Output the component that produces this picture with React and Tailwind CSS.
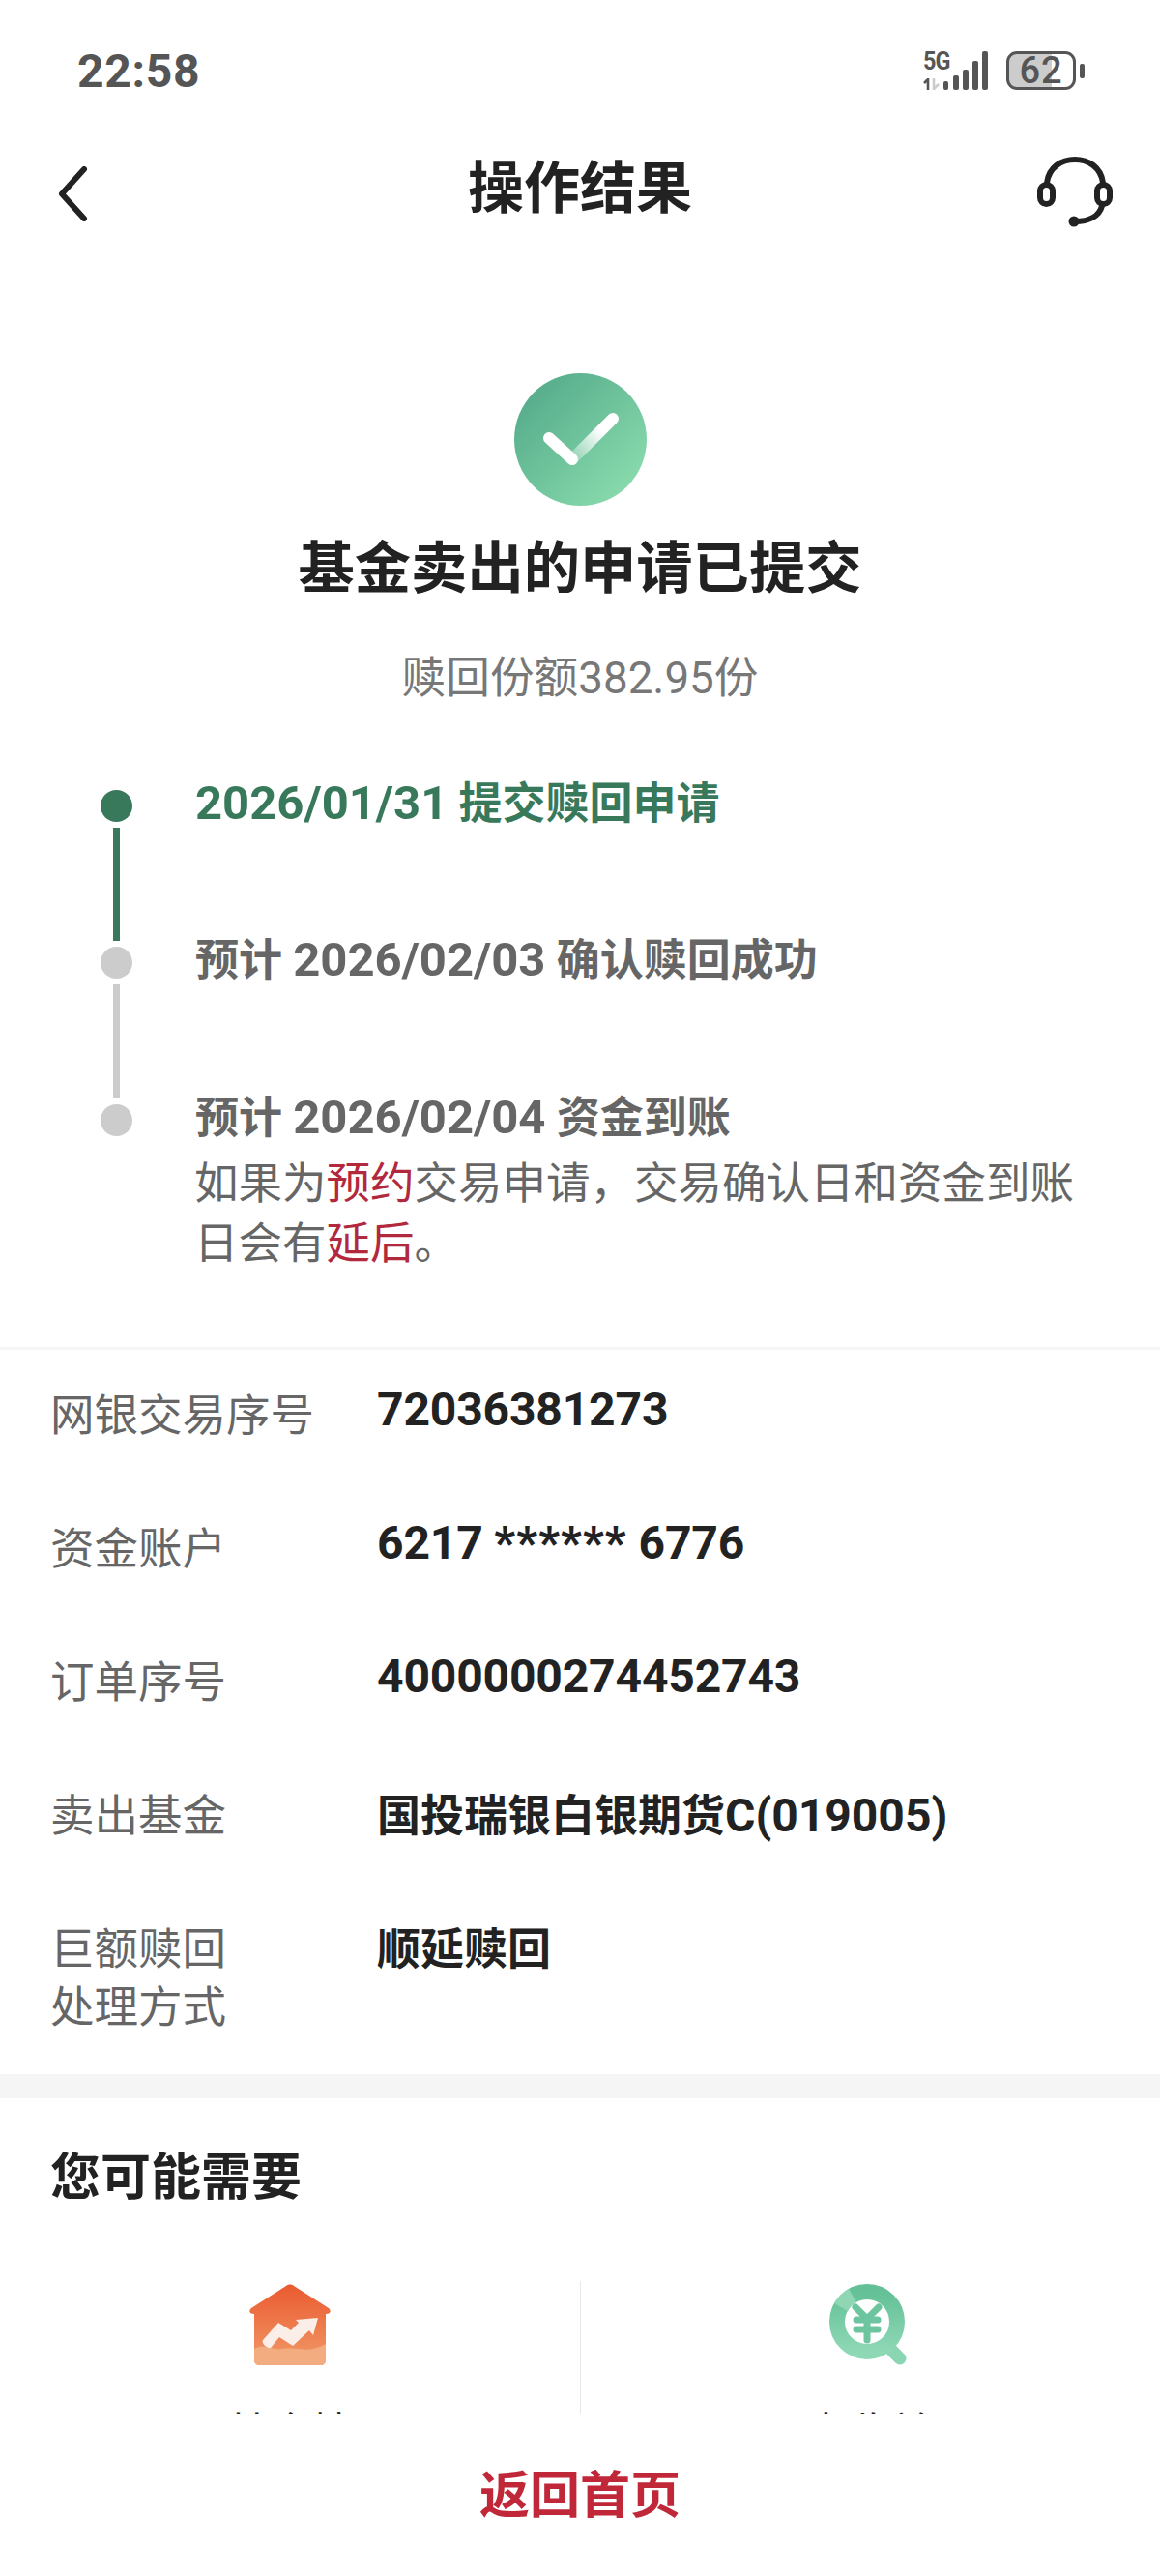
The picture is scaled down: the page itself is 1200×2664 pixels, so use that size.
import React from 'react'

const steps = [
  { pre: '', date: '2026/01/31', text: ' 提交赎回申请', done: true },
  { pre: '预计 ', date: '2026/02/03', text: ' 确认赎回成功' },
]

const rows = [
  { label: '网银交易序号', value: '72036381273', num: true },
  { label: '资金账户', value: <>6217 <span className="tracking-[1.1px]">******</span> 6776</>, num: true },
  { label: '订单序号', value: '4000000274452743', num: true },
  { label: '卖出基金', value: <span className="block -mt-[1px]">国投瑞银白银期货<span className="text-[48px]">C(019005)</span></span> },
  { label: <>巨额赎回<br />处理方式</>, value: '顺延赎回' },
]

function SignalIcon() {
  return (
    <div className="flex items-end gap-[3px] h-[40px]">
      <div className="flex flex-col w-[28px] h-[40px] justify-between">
        <span className="text-[26px] leading-[20px] h-[20px] font-bold text-[#555] tracking-[-1px] scale-x-90 origin-left">5G</span>
        <svg width="18" height="12" viewBox="0 0 18 12">
          <path d="M5 0 L5 12 M1 5 L5 1" stroke="#555" strokeWidth="2.6" fill="none" />
          <path d="M11 0 L11 12 M11 11 L16 6" stroke="#ccc" strokeWidth="2.6" fill="none" />
        </svg>
      </div>
      <svg width="48" height="40" viewBox="0 0 48 40" className="-ml-[11px]">
        <rect x="1" y="31" width="5" height="9" rx="2" fill="#555" />
        <rect x="11" y="25" width="6" height="15" rx="2" fill="#555" />
        <rect x="21" y="19" width="6" height="21" rx="2" fill="#555" />
        <rect x="31" y="10" width="6" height="30" rx="2" fill="#555" />
        <rect x="41" y="0" width="6" height="40" rx="2" fill="#555" />
      </svg>
    </div>
  )
}

function BatteryIcon() {
  return (
    <div className="flex items-center gap-[4px]">
      <div className="w-[72px] h-[40px] rounded-[11px] border-[3px] border-[#555] bg-[linear-gradient(90deg,#ccc_67%,transparent_67%)] flex items-center justify-center">
        <span className="text-[38px] leading-none font-medium text-[#555] tracking-[1px]">62</span>
      </div>
      <div className="w-[5px] h-[15px] rounded-[2px] bg-[#555]"></div>
    </div>
  )
}

function HeadsetIcon() {
  return (
    <svg width="78" height="74" viewBox="0 0 78 74" fill="none" stroke="#222" strokeWidth="6" strokeLinecap="round">
      <path d="M10 27 C12 11 25 3 39 3 C53 3 66 11 68 27" />
      <rect x="3" y="29" width="13" height="20" rx="6.5" />
      <rect x="62" y="29" width="13" height="20" rx="6.5" />
      <path d="M67 51 C64 62 53 67 39 67" />
      <circle cx="38" cy="67" r="5.5" fill="#222" stroke="none" />
    </svg>
  )
}

function CheckCircle() {
  return (
    <svg width="137" height="137" viewBox="0 0 137 137">
      <defs>
        <linearGradient id="circleFill" x1="0.1" y1="0.1" x2="0.9" y2="0.9">
          <stop offset="0" stopColor="#55ab8b" />
          <stop offset="1" stopColor="#8adcad" />
        </linearGradient>
        <linearGradient id="tickFade" x1="0" y1="1" x2="1" y2="0">
          <stop offset="0" stopColor="#ffffff" stopOpacity="0.2" />
          <stop offset="0.7" stopColor="#ffffff" />
        </linearGradient>
      </defs>
      <circle cx="68.5" cy="68.5" r="68.5" fill="url(#circleFill)" />
      <path d="M60 89 L102 47" stroke="url(#tickFade)" strokeWidth="12" strokeLinecap="round" fill="none" />
      <path d="M36 67 L60 89" stroke="#fff" strokeWidth="12" strokeLinecap="round" fill="none" />
    </svg>
  )
}

function HouseIcon() {
  return (
    <svg width="84" height="85" viewBox="0 0 84 85">
      <defs>
        <linearGradient id="houseFill" x1="0" y1="0" x2="0" y2="1">
          <stop offset="0" stopColor="#ea5a30" />
          <stop offset="1" stopColor="#f19a68" />
        </linearGradient>
      </defs>
      <path d="M38 2 C40 0 44 0 46 2 L82 25 C85 28 84 31 79 31 L79 78 C79 82 77 84 73 84 L11 84 C7 84 5 82 5 78 L5 31 C0 31 -1 28 2 25 Z" fill="url(#houseFill)" />
      <path d="M5 67 C16 61 24 69 34 67 C48 64 60 73 79 62 L79 78 C79 82 77 84 73 84 L11 84 C7 84 5 82 5 78 Z" fill="#f3ac80" />
      <path d="M14 58 L30 40 L43 48 L51 40 L48 37 L71 35 L66 53 L62 48 L45 64 L31 55 L22 66 C19 67 12 62 14 58 Z" fill="#fbeee8" />
    </svg>
  )
}

function SearchIcon() {
  return (
    <svg width="84" height="85" viewBox="0 0 84 85" fill="none">
      <defs>
        <linearGradient id="ringFill" x1="0.5" y1="0" x2="0.5" y2="1">
          <stop offset="0" stopColor="#63c097" />
          <stop offset="1" stopColor="#8fd8b6" />
        </linearGradient>
      </defs>
      <path d="M63 66 L74 77" stroke="#8ad6b3" strokeWidth="13" strokeLinecap="round" />
      <circle cx="40" cy="39" r="31" stroke="url(#ringFill)" strokeWidth="16" />
      <path d="M13 24 A31 31 0 0 1 25 12" stroke="#8fd6b5" strokeWidth="16" />
      <g stroke="#6cc59f" strokeWidth="7" strokeLinecap="round">
        <path d="M28 24 L40 36 L52 24" />
        <path d="M29 37 H51" />
        <path d="M29 47 H51" />
        <path d="M40 36 V58" />
      </g>
    </svg>
  )
}

function App() {
  return (
    <div className="w-[1200px] h-[2664px] bg-white flex flex-col overflow-hidden font-[Roboto,'Noto_Sans_CJK_SC',sans-serif]">
      <main className="flex-1 overflow-hidden">
        <div className="h-[145px] flex justify-between pl-[80px] pr-[78px] pt-[53px]">
          <span className="mt-[2px] text-[48px] leading-[38px] font-bold text-[#555] tracking-[0.7px]">22:58</span>
          <div className="flex gap-[18px] h-[40px]">
            <SignalIcon />
            <BatteryIcon />
          </div>
        </div>

        <header className="h-[100px] grid grid-cols-[1fr_auto_1fr] items-center px-[49px]">
          <svg width="32" height="57" viewBox="0 0 32 57" fill="none" stroke="#222" strokeWidth="6" strokeLinecap="round" strokeLinejoin="round" className="mt-[10px] ml-[11px]">
            <path d="M27 3 L4 28.5 L27 54" />
          </svg>
          <span className="text-[58px] leading-[80px] font-bold text-[#222]">操作结果</span>
          <div className="flex justify-end mt-[8px]">
            <HeadsetIcon />
          </div>
        </header>

        <section className="flex flex-col items-center pt-[141px]">
          <CheckCircle />
          <h1 className="mt-[25px] text-[58.3px] leading-[80px] font-bold text-[#222]">基金卖出的申请已提交</h1>
          <p className="mt-[44px] text-[45.7px] leading-[60px] text-[#777]">赎回份额382.95份</p>
        </section>

        <section className="pt-[85px] pl-[104px] pr-[80px]">
          {steps.map((s, i) => (
            <div key={i} className="flex gap-[65px]">
              <div className="flex flex-col items-center w-[33px]">
                <div className={s.done ? 'size-[33px] rounded-full bg-[#39795b]' : 'size-[33px] rounded-full bg-[#ccc]'}></div>
                <div className={s.done ? 'w-[7px] h-[117px] mt-[6px] mb-[6px] bg-[#39795b]' : 'w-[7px] h-[117px] mt-[6px] mb-[7px] bg-[#ccc]'}></div>
              </div>
              <div className={s.done ? '-mt-[16px] text-[45px] leading-[60px] font-bold text-[#39795b]' : '-mt-[16px] text-[45px] leading-[60px] font-bold text-[#666]'}>
                {s.pre}<span className="text-[49px]">{s.date}</span>{s.text}
              </div>
            </div>
          ))}
          <div className="flex gap-[65px]">
            <div className="size-[33px] rounded-full bg-[#ccc] shrink-0"></div>
            <div className="-mt-[16px]">
              <div className="text-[45px] leading-[60px] font-bold text-[#666]">预计 <span className="text-[49px]">2026/02/04</span> 资金到账</div>
              <p className="mt-[7px] -ml-[1px] text-[45.5px] leading-[62px] text-[#666]">
                如果为<span className="text-[#b2283d]">预约</span>交易申请，交易确认日和资金到账日会有<span className="text-[#b2283d]">延后</span>。
              </p>
            </div>
          </div>
        </section>

        <section className="mt-[75px] border-t-[3px] border-[#f5f5f5] pt-[39px] px-[52px] flex flex-col gap-[78px]">
          {rows.map((r, i) => (
            <div key={i} className="flex">
              <div className="w-[338px] shrink-0 text-[45.5px] leading-[60px] text-[#666]">{r.label}</div>
              <div className={r.num ? '-mt-[7px] text-[48px] leading-[60px] font-bold text-[#222] tracking-[-0.15px]' : 'text-[45px] leading-[60px] font-bold text-[#222]'}>{r.value}</div>
            </div>
          ))}
        </section>

        <div className="mt-[38px] h-[25px] bg-[#f5f5f5]"></div>

        <h2 className="mt-[48px] pl-[52px] text-[52px] leading-[70px] font-bold text-[#222]">您可能需要</h2>

        <div className="mt-[71px] grid grid-cols-[601px_1fr]">
          <div className="border-r border-[#e8e8e8] flex flex-col items-center pt-[3px]">
            <HouseIcon />
            <span className="mt-[40px] text-[44px] leading-[60px] text-[#222]">基金榜</span>
          </div>
          <div className="flex flex-col items-center pt-[3px] pr-[4px]">
            <SearchIcon />
            <span className="mt-[40px] text-[44px] leading-[60px] text-[#222]">查收益</span>
          </div>
        </div>
      </main>

      <footer className="h-[168px] shrink-0 bg-white flex items-start justify-center pt-[49px]">
        <span className="text-[52px] leading-[74px] font-bold text-[#c0283a]">返回首页</span>
      </footer>
    </div>
  )
}

export default App
